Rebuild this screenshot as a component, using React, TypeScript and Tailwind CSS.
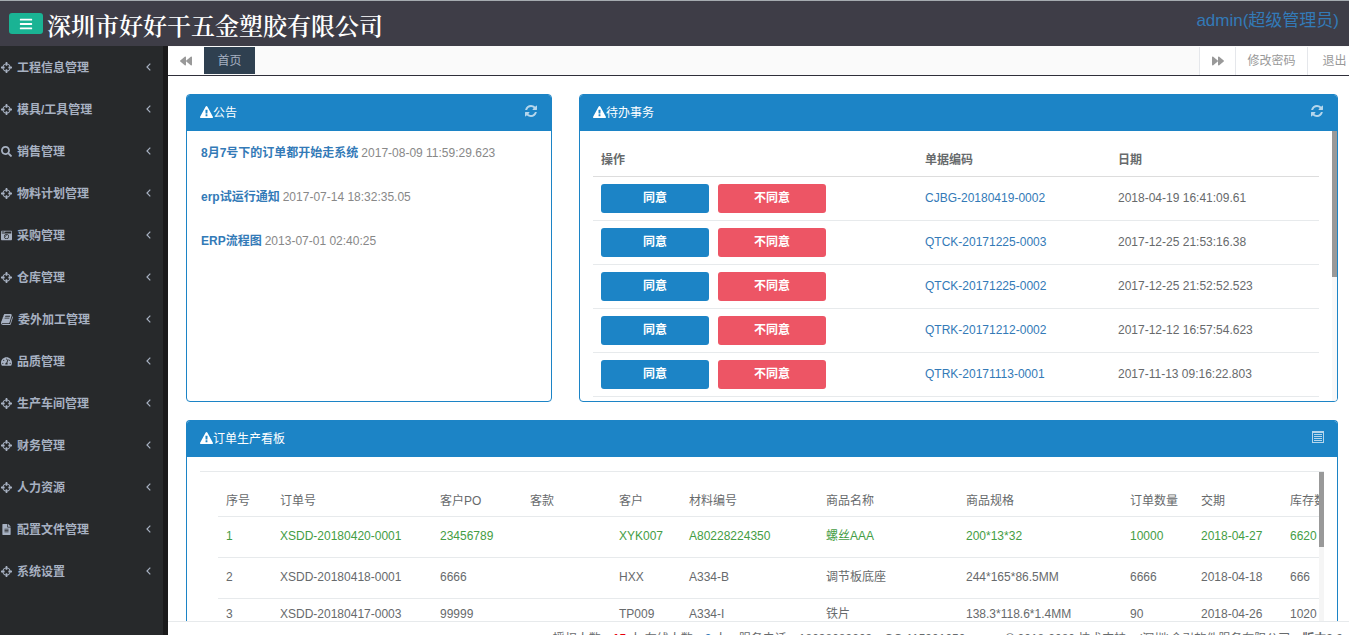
import type { ComponentType, ReactNode } from 'react'
import { FaBackward, FaBars, FaCameraRetro, FaFileAlt, FaForward, FaSearch, FaTachometerAlt } from 'react-icons/fa'

type Icon = ComponentType<{ className?: string }>

function CrosshairIcon({ className }: { className?: string }) {
  return (
    <svg viewBox="128 128 1536 1536" className={className} fill="currentColor">
      <path d="M1325 1024h-109q-26 0-45-19t-19-45v-128q0-26 19-45t45-19h109q-32-108-112.5-188.5t-188.5-112.5v109q0 26-19 45t-45 19h-128q-26 0-45-19t-19-45v-109q-108 32-188.5 112.5t-112.5 188.5h109q26 0 45 19t19 45v128q0 26-19 45t-45 19h-109q32 108 112.5 188.5t188.5 112.5v-109q0-26 19-45t45-19h128q26 0 45 19t19 45v109q108-32 188.5-112.5t112.5-188.5zm339-192v128q0 26-19 45t-45 19h-143q-37 161-154.5 278.5t-278.5 154.5v143q0 26-19 45t-45 19h-128q-26 0-45-19t-19-45v-143q-161-37-278.5-154.5t-154.5-278.5h-143q-26 0-45-19t-19-45v-128q0-26 19-45t45-19h143q37-161 154.5-278.5t278.5-154.5v-143q0-26 19-45t45-19h128q26 0 45 19t19 45v143q161 37 278.5 154.5t154.5 278.5h143q26 0 45 19t19 45z" />
    </svg>
  )
}

function BookIcon({ className }: { className?: string }) {
  return (
    <svg viewBox="64 128 1664 1536" className={className} fill="currentColor">
      <path d="M1703 478q40 57 18 129l-275 906q-19 64-76.5 107.5t-122.5 43.5h-923q-77 0-148.5-53.5t-99.5-131.5q-24-67-2-127 0-4 3-27t4-37q1-8-3-21.5t-3-19.5q2-11 8-21t16.5-23.5 16.5-23.5q23-38 45-91.5t30-91.5q3-10 .5-30t-.5-28q3-11 17-28t17-23q21-36 42-92t25-90q1-9-2.5-32t.5-28q4-13 22-30.5t22-22.5q19-26 42.5-84.5t27.5-96.5q1-8-3-25.5t-2-26.5q2-8 9-18t18-23 17-21q8-12 16.5-30.5t15-35 16-36 19.5-32 26.5-23.5 36-11.5 47.5 5.5l-1 3q38-9 51-9h761q74 0 114 56t18 130l-274 906q-36 119-71.5 153.5t-128.5 34.5h-869q-27 0-38 15-11 16-1 43 24 70 144 70h923q29 0 56-15.5t35-41.5l300-987q7-22 5-57 38 15 59 43zm-1064 2q-4 13 2 22.5t20 9.5h608q13 0 25.5-9.5t16.5-22.5l21-64q4-13-2-22.5t-20-9.5h-608q-13 0-25.5 9.5t-16.5 22.5zm-83 256q-4 13 2 22.5t20 9.5h608q13 0 25.5-9.5t16.5-22.5l21-64q4-13-2-22.5t-20-9.5h-608q-13 0-25.5 9.5t-16.5 22.5z" />
    </svg>
  )
}

const MENU: { icon: Icon; label: string }[] = [
  { icon: CrosshairIcon, label: '工程信息管理' },
  { icon: CrosshairIcon, label: '模具/工具管理' },
  { icon: FaSearch, label: '销售管理' },
  { icon: CrosshairIcon, label: '物料计划管理' },
  { icon: FaCameraRetro, label: '采购管理' },
  { icon: CrosshairIcon, label: '仓库管理' },
  { icon: BookIcon, label: '委外加工管理' },
  { icon: FaTachometerAlt, label: '品质管理' },
  { icon: CrosshairIcon, label: '生产车间管理' },
  { icon: CrosshairIcon, label: '财务管理' },
  { icon: CrosshairIcon, label: '人力资源' },
  { icon: FaFileAlt, label: '配置文件管理' },
  { icon: CrosshairIcon, label: '系统设置' },
]

const NOTICES = [
  { title: '8月7号下的订单都开始走系统', time: '2017-08-09 11:59:29.623' },
  { title: 'erp试运行通知', time: '2017-07-14 18:32:35.05' },
  { title: 'ERP流程图', time: '2013-07-01 02:40:25' },
]

const TODOS = [
  { code: 'CJBG-20180419-0002', date: '2018-04-19 16:41:09.61' },
  { code: 'QTCK-20171225-0003', date: '2017-12-25 21:53:16.38' },
  { code: 'QTCK-20171225-0002', date: '2017-12-25 21:52:52.523' },
  { code: 'QTRK-20171212-0002', date: '2017-12-12 16:57:54.623' },
  { code: 'QTRK-20171113-0001', date: '2017-11-13 09:16:22.803' },
]

const COLUMNS = [
  { title: '序号', width: 'w-[54px]' },
  { title: '订单号', width: 'w-[160px]' },
  { title: '客户PO', width: 'w-[90px]' },
  { title: '客款', width: 'w-[89px]' },
  { title: '客户', width: 'w-[70px]' },
  { title: '材料编号', width: 'w-[137px]' },
  { title: '商品名称', width: 'w-[140px]' },
  { title: '商品规格', width: 'w-[164px]' },
  { title: '订单数量', width: 'w-[71px]' },
  { title: '交期', width: 'w-[89px]' },
  { title: '库存数量', width: 'w-[100px]' },
]

const ORDERS = [
  ['1', 'XSDD-20180420-0001', '23456789', '', 'XYK007', 'A80228224350', '螺丝AAA', '200*13*32', '10000', '2018-04-27', '6620'],
  ['2', 'XSDD-20180418-0001', '6666', '', 'HXX', 'A334-B', '调节板底座', '244*165*86.5MM', '6666', '2018-04-18', '666'],
  ['3', 'XSDD-20180417-0003', '99999', '', 'TP009', 'A334-I', '铁片', '138.3*118.6*1.4MM', '90', '2018-04-26', '1020'],
]

function WarningIcon() {
  return (
    <svg viewBox="0 0 1792 1792" className="mb-0.5 h-[13px] w-[13px]" fill="currentColor">
      <path d="M1024 1375v-190q0-14-9.5-23.5t-22.5-9.5h-192q-13 0-22.5 9.5t-9.5 23.5v190q0 14 9.5 23.5t22.5 9.5h192q13 0 22.5-9.5t9.5-23.5zm-2-374l18-459q0-12-10-19-13-11-24-11h-220q-11 0-24 11-10 7-10 21l17 457q0 10 10 16.5t24 6.5h185q14 0 23.5-6.5t10.5-16.5zm-14-934l768 1408q35 63-2 126-17 29-46.5 46t-63.5 17h-1536q-34 0-63.5-17t-46.5-46q-37-63-2-126l768-1408q17-31 47-49t65-18 65 18 47 49z" />
    </svg>
  )
}

function RefreshIcon() {
  return (
    <svg viewBox="0 0 1792 1792" className="h-3.5 w-3.5" fill="currentColor">
      <path d="M1639 1056q0 5-1 7-64 268-268 434.5t-478 166.5q-146 0-282.5-55t-243.5-157l-129 129q-19 19-45 19t-45-19-19-45v-448q0-26 19-45t45-19h448q26 0 45 19t19 45-19 45l-137 137q71 66 161 102t187 36q134 0 250-65t186-179q11-17 53-117 8-23 30-23h192q13 0 22.5 9.5t9.5 22.5zm25-800v448q0 26-19 45t-45 19h-448q-26 0-45-19t-19-45 19-45l138-138q-148-137-349-137-134 0-250 65t-186 179q-11 17-53 117-8 23-30 23h-199q-13 0-22.5-9.5t-9.5-22.5v-7q65-268 270-434.5t480-166.5q146 0 284 55.5t245 156.5l130-129q19-19 45-19t45 19 19 45z" />
    </svg>
  )
}

function ListIcon() {
  return (
    <svg viewBox="0 0 12 12" className="h-3 w-3" fill="none" stroke="currentColor" shapeRendering="crispEdges">
      <path d="M.5 .5h11v11h-11zM0 1.5h12M2 3.5h8M2 5.5h8M2 7.5h8M2 9.5h8" />
    </svg>
  )
}

function ChevronIcon() {
  return (
    <svg viewBox="0 0 5 8" className="mb-0.5 h-2 w-[5px]" fill="none" stroke="currentColor" strokeWidth="1.2">
      <path d="M4.3 .7L1 4l3.3 3.3" />
    </svg>
  )
}

function Panel({ title, action, actionLabel, className = '', children }: {
  title: string
  action: ReactNode
  actionLabel: string
  className?: string
  children: ReactNode
}) {
  return (
    <section className={`flex min-w-0 flex-col overflow-hidden rounded border border-[#1c84c6] ${className}`}>
      <header className="flex h-9 shrink-0 items-center justify-between bg-[#1c84c6] px-[13px] text-white">
        <h2 className="flex items-center">
          <WarningIcon />
          {title}
        </h2>
        <button aria-label={actionLabel} className="pb-1 text-[#b5d6ec]">
          {action}
        </button>
      </header>
      {children}
    </section>
  )
}

function Sidebar() {
  return (
    <nav className="flex w-[168px] shrink-0 border-r-[5px] border-[#1a1a1b] bg-[#27292b] pt-px">
      <ul className="w-full">
        {MENU.map((m) => (
          <li key={m.label}>
            <a href="#" className="flex h-[42px] items-center pr-3 font-bold text-[#a7b1c2]">
              <m.icon className="mb-0.5 ml-px mr-[5px] h-[11px] w-auto shrink-0" />
              <span className="flex-1">{m.label}</span>
              <ChevronIcon />
            </a>
          </li>
        ))}
      </ul>
    </nav>
  )
}

function TabBar() {
  return (
    <div className="flex h-[30px] shrink-0 border-b border-[#2f2f3a] bg-[#fafafa] pt-px text-[#999]">
      <button aria-label="向左" className="flex w-9 items-center justify-center bg-white">
        <FaBackward className="h-3 w-3" />
      </button>
      <a href="#" className="mb-px flex w-[51px] items-center justify-center bg-[#2f4050] text-[#a7b1c2]">首页</a>
      <div className="flex-1" />
      <button aria-label="向右" className="flex w-9 items-center justify-center border-l border-gray-200 bg-white">
        <FaForward className="h-3 w-3" />
      </button>
      <button className="w-[72px] border-l border-gray-200 bg-white">修改密码</button>
      <button className="w-[42px] whitespace-nowrap border-l border-gray-200 bg-white pl-3">退出</button>
    </div>
  )
}

function TodoTable() {
  return (
    <div className="flex flex-1 overflow-hidden">
      <div className="flex-1 px-[13px] pt-3.5">
        <table className="w-full table-fixed border-collapse text-left">
          <colgroup>
            <col className="w-[324px]" />
            <col className="w-[193px]" />
            <col />
          </colgroup>
          <thead>
            <tr className="h-[31px] border-b border-[#ddd]">
              <th className="px-2">操作</th>
              <th className="px-2">单据编码</th>
              <th className="px-2">日期</th>
            </tr>
          </thead>
          <tbody>
            {TODOS.map((t) => (
              <tr key={t.code} className="h-11 border-b border-[#e7eaec]">
                <td className="px-2">
                  <div className="flex gap-[9px] font-bold text-white">
                    <button className="h-[29px] w-[108px] rounded-[3px] bg-[#1c84c6]">同意</button>
                    <button className="h-[29px] w-[108px] rounded-[3px] bg-[#ed5565]">不同意</button>
                  </div>
                </td>
                <td className="px-2">
                  <a href="#" className="text-[#337ab7]">{t.code}</a>
                </td>
                <td className="px-2">{t.date}</td>
              </tr>
            ))}
          </tbody>
        </table>
      </div>
      <div className="w-[5px] bg-[#f8f8f8]">
        <div className="h-[146px] bg-[#999]" />
      </div>
    </div>
  )
}

function OrderBoard() {
  return (
    <div className="mx-[13px] mt-3.5 flex flex-1 overflow-hidden border-t border-[#e7eaec]">
      <div className="min-w-0 flex-1 overflow-hidden pl-[18px]">
        <table className="w-[1164px] table-fixed border-collapse text-left">
          <thead>
            <tr className="h-11 border-b border-[#e7eaec]">
              {COLUMNS.map((c) => (
                <th key={c.title} className={`${c.width} whitespace-nowrap px-2 pt-3.5 font-normal`}>
                  {c.title}
                </th>
              ))}
            </tr>
          </thead>
          <tbody>
            {ORDERS.map((row) => (
              <tr
                key={row[0]}
                className="h-[41px] border-b border-[#e7eaec] first:text-[#449d44] last:h-[34px]"
              >
                {row.map((cell, i) => (
                  <td key={i} className="whitespace-nowrap px-2 pb-0.5">{cell}</td>
                ))}
              </tr>
            ))}
          </tbody>
        </table>
      </div>
      <div className="w-[5px] bg-[#f5f5f5]">
        <div className="h-[75px] bg-[#999]" />
      </div>
    </div>
  )
}

export default function App() {
  return (
    <div className="flex h-screen flex-col overflow-hidden bg-white font-['Liberation_Sans','Noto_Sans_CJK_SC',sans-serif] text-xs text-[#676a6c]">
      <header className="flex h-[46px] shrink-0 items-center justify-between border-t border-[#a5abb0] bg-[#3e3d47] pl-[9px] pr-2.5">
        <div className="flex items-center gap-1">
          <button aria-label="菜单" className="flex h-[21px] w-[34px] items-center justify-center rounded-[3px] bg-[#1ab394] text-white">
            <FaBars className="h-3.5 w-3.5" />
          </button>
          <h1 className="pt-1.5 font-['Liberation_Serif','Noto_Serif_CJK_SC','Noto_Sans_CJK_SC',serif] text-2xl font-semibold text-white">
            深圳市好好干五金塑胶有限公司
          </h1>
        </div>
        <a href="#" className="pb-1 text-[17px] text-[#337ab7]">admin(超级管理员)</a>
      </header>

      <div className="flex min-h-0 flex-1">
        <Sidebar />
        <div className="flex min-w-0 flex-1 flex-col">
          <TabBar />
          <main className="flex min-h-0 flex-1 flex-col gap-[18px] overflow-hidden pl-[18px] pr-[11px] pt-[18px]">
            <div className="grid h-[308px] shrink-0 grid-cols-[366fr_759fr] gap-[27px]">
              <Panel title="公告" action={<RefreshIcon />} actionLabel="刷新公告">
                <ul className="px-3.5">
                  {NOTICES.map((n) => (
                    <li key={n.title} className="flex h-11 items-center gap-[3px]">
                      <a href="#" className="font-bold text-[#337ab7]">{n.title}</a>
                      <time className="text-[#888]">{n.time}</time>
                    </li>
                  ))}
                </ul>
              </Panel>
              <Panel title="待办事务" action={<RefreshIcon />} actionLabel="刷新待办">
                <TodoTable />
              </Panel>
            </div>
            <Panel title="订单生产看板" action={<ListIcon />} actionLabel="查看列表" className="min-h-0 flex-1 rounded-b-none border-b-0">
              <OrderBoard />
            </Panel>
          </main>
          <footer className="flex h-3.5 shrink-0 justify-end gap-3 overflow-hidden whitespace-nowrap border-t border-[#e7eaec] pr-1.5 pt-[9px]">
            <span>授权人数：<b className="text-red-600">15</b> 人 在线人数：<b className="text-[#337ab7]">3</b> 人</span>
            <span>服务电话：18038089203</span>
            <span>QQ:115901050</span>
            <span className="ml-7">© 2018-2080 技术支持：(深圳)金引软件服务有限公司</span>
            <b>版本3.0</b>
          </footer>
        </div>
      </div>
    </div>
  )
}
